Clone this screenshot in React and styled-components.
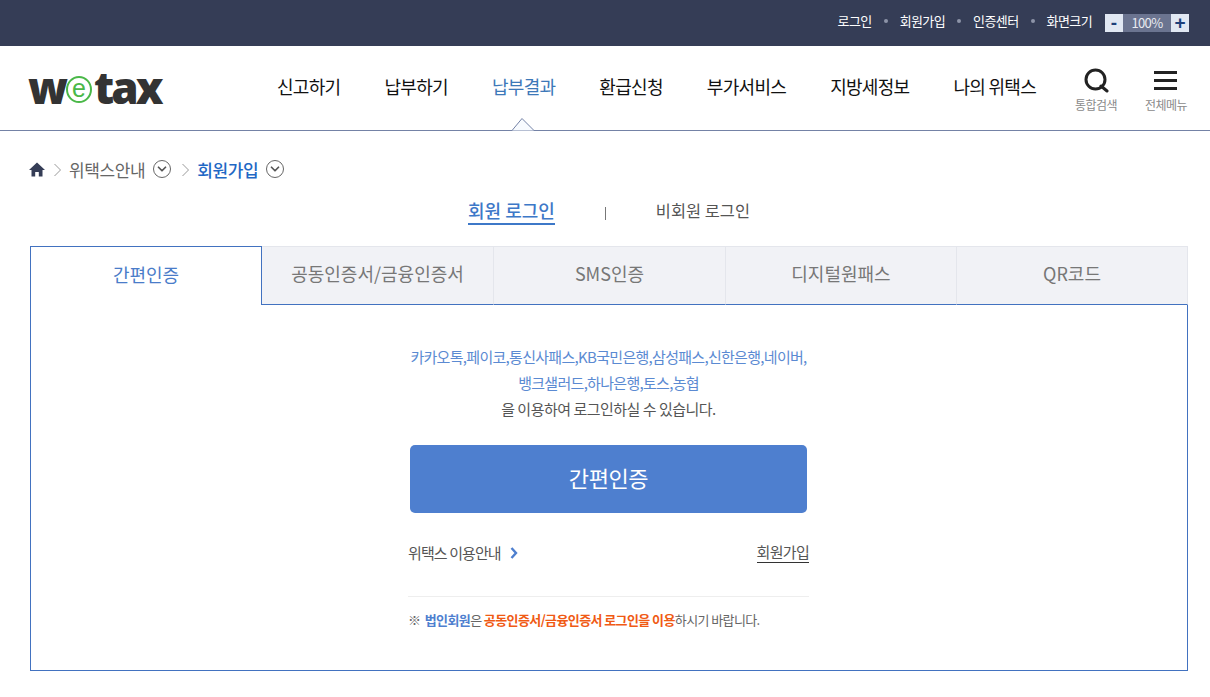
import React from "react";
import styled, { createGlobalStyle } from "styled-components";
import { FiChevronDown } from "react-icons/fi";

const GlobalStyle = createGlobalStyle`
  html, body {
    margin: 0;
    padding: 0;
    background: #fff;
    font-family: "Noto Sans CJK KR", "Noto Sans", sans-serif;
    color: #333;
    overflow: hidden;
  }
  * { box-sizing: border-box; }
`;

const TopBar = styled.div`
  height: 46px;
  background: #353d56;
  display: flex;
  align-items: center;
  justify-content: flex-end;
  padding: 0 21px 0 0;
`;
const TopLink = styled.a`
  color: #fff;
  font-size: 13px;
  letter-spacing: -0.6px;
  display: flex;
  align-items: center;
  margin-bottom: 5px;
  &:not(:last-of-type)::after {
    content: "";
    width: 4px;
    height: 4px;
    border-radius: 50%;
    background: #8d94a8;
    margin: 0 12px 0 12px;
  }
`;
const Zoomer = styled.div`
  display: flex;
  height: 18px;
  margin-left: 13px;
  align-items: stretch;
`;
const ZoomBtn = styled.span`
  width: 18px;
  background: #e1e8f3;
  color: #1d3f7a;
  font: 700 19px/17px "Liberation Sans", sans-serif;
  text-align: center;
`;
const ZoomValue = styled.span`
  width: 48px;
  background: #6b7490;
  color: #e9ebf0;
  font: 400 13px/17px "Noto Sans CJK KR", sans-serif;
  letter-spacing: -0.6px;
  text-align: center;
`;

const Header = styled.header`
  position: relative;
  height: 85px;
  border-bottom: 1px solid #7482a6;
  display: flex;
  align-items: flex-start;
  padding-left: 28px;
`;
const Logo = styled.div`
  width: 249px;
  height: 60px;
  display: flex;
  align-items: center;
  padding-top: 21px;
  font: 800 44px/60px "Open Sans", sans-serif;
  color: #333;
  letter-spacing: -3px;
`;
const LogoMark = styled.span`
  width: 26px;
  height: 27px;
  margin: 6px 2px 0 1px;
  border: 2px solid #4ab848;
  border-radius: 50%;
  color: #4ab848;
  font: 400 25px/20px "Liberation Sans", sans-serif;
  text-align: center;
  letter-spacing: 0;
`;
const Nav = styled.nav`
  display: flex;
  gap: 44px;
  padding-top: 27px;
`;
const NavItem = styled.a`
  color: ${(p) => (p.$active ? "#3d78b8" : "#111")};
  font-size: 18px;
  line-height: 27px;
  letter-spacing: -0.7px;
  white-space: nowrap;
`;
const HeaderTools = styled.div`
  display: flex;
  gap: 26px;
  margin-left: 38px;
  padding-top: 22px;
`;
const Tool = styled.div`
  width: 44px;
  display: flex;
  flex-direction: column;
  align-items: center;
  color: #8a8a8a;
  font-size: 12px;
  letter-spacing: -0.5px;
  line-height: 16px;
  white-space: nowrap;
  svg { margin-bottom: 3px; }
`;
const Notch = styled.svg`
  position: absolute;
  left: 509px;
  bottom: -1px;
  width: 26px;
  height: 14px;
`;

const Main = styled.main`
  padding: 0 22px 0 30px;
`;
const Crumbs = styled.div`
  height: 68px;
  padding-top: 26px;
  display: flex;
  align-items: flex-start;
  font-size: 17px;
  line-height: 25px;
  letter-spacing: -0.4px;
  color: #666;
`;
const HomeIcon = styled.svg`
  width: 16px;
  height: 16px;
  margin: 5px 0 0 -1px;
  fill: #353d56;
`;
const CrumbSep = styled.svg`
  width: 7px;
  height: 14px;
  margin: 6px 8px 0 ${(p) => p.$gap}px;
  fill: none;
  stroke: #999;
`;
const CrumbText = styled.span`
  color: ${(p) => (p.$current ? "#1f68c5" : "#666")};
  font-weight: ${(p) => (p.$current ? 500 : 400)};
`;
const CrumbToggle = styled.span`
  width: 18px;
  height: 18px;
  margin: 3px 0 0 8px;
  border: 1px solid #666;
  border-radius: 50%;
  display: flex;
  align-items: center;
  justify-content: center;
  color: #555;
`;

const SubTabs = styled.div`
  height: 47px;
  display: flex;
  justify-content: center;
  align-items: flex-start;
`;
const SubTab = styled.a`
  font-size: ${(p) => (p.$active ? "18px" : "16.4px")};
  line-height: 23px;
  padding-bottom: 1px;
  font-weight: ${(p) => (p.$active ? 500 : 400)};
  color: ${(p) => (p.$active ? "#3d78c8" : "#555")};
  border-bottom: ${(p) => (p.$active ? "2px solid #3d78c8" : "2px solid transparent")};
`;
const SubDivider = styled.span`
  width: 1px;
  height: 13px;
  margin: 8px 50px 0 50px;
  background: #777;
`;

const Tabs = styled.div`
  display: grid;
  grid-template-columns: 232px 232px 232px 231px 231px;
  height: 59px;
`;
const Tab = styled.div`
  display: flex;
  align-items: center;
  justify-content: center;
  padding-bottom: 5px;
  font-size: 18px;
  letter-spacing: 0;
  color: ${(p) => (p.$active ? "#4a7cc9" : "#777")};
  background: ${(p) => (p.$active ? "#fff" : "#f1f2f6")};
  border-style: solid;
  border-color: ${(p) => (p.$active ? "#4272c0" : "#e4e6ec")};
  border-width: ${(p) => (p.$active ? "1px 1px 0 1px" : "1px 1px 1px 0")};
  border-bottom-color: #4272c0;
`;
const Panel = styled.section`
  height: 366px;
  border: 1px solid #4272c0;
  border-top: 0;
  display: flex;
  flex-direction: column;
  align-items: center;
  padding: 39px 1px 0 0;
`;
const Intro = styled.p`
  margin: 0;
  font-size: 15px;
  line-height: 26px;
  letter-spacing: -0.7px;
  text-align: center;
  color: #555;
`;
const Providers = styled.span`
  color: #5b8ad2;
`;
const Usage = styled.span`
  letter-spacing: -0.5px;
`;
const LoginButton = styled.button`
  width: 397px;
  height: 68px;
  margin-top: 23px;
  padding: 0 0 4px;
  border: 0;
  border-radius: 5px;
  background: #4e7fcf;
  color: #fff;
  font: 400 22px "Noto Sans CJK KR", sans-serif;
  letter-spacing: -0.4px;
`;
const LinkRow = styled.div`
  width: 401px;
  height: 84px;
  padding-top: 28px;
  display: flex;
  justify-content: space-between;
  align-items: flex-start;
  border-bottom: 1px solid #eee;
  font-size: 15px;
  line-height: 24px;
  letter-spacing: -0.7px;
  color: #555;
`;
const GuideLink = styled.a`
  display: flex;
  align-items: center;
  letter-spacing: -0.9px;
`;
const GuideArrow = styled.svg`
  width: 8px;
  height: 12px;
  margin-left: 9px;
  fill: none;
  stroke: #4e7fcf;
  stroke-width: 2.4;
`;
const JoinLink = styled.a`
  border-bottom: 1px solid #333;
  height: 22px;
  line-height: 22px;
`;
const Notice = styled.p`
  width: 401px;
  margin: 11px 0 0;
  font-size: 13px;
  line-height: 24px;
  letter-spacing: -0.6px;
  color: #666;
  white-space: nowrap;
`;
const NoticeMark = styled.span`
  margin-right: 2px;
`;
const Strong = styled.b`
  font-weight: 700;
  color: ${(p) => p.$color};
`;

const navItems = ["신고하기", "납부하기", "납부결과", "환급신청", "부가서비스", "지방세정보", "나의 위택스"];
const topLinks = ["로그인", "회원가입", "인증센터", "화면크기"];
const tabItems = ["간편인증", "공동인증서/금융인증서", "SMS인증", "디지털원패스", "QR코드"];

const Sep = ({ gap }) => (
  <CrumbSep viewBox="0 0 7 14" $gap={gap}>
    <path d="M0.5 1l6 6-6 6" />
  </CrumbSep>
);

const App = () => {
  return (
    <>
      <GlobalStyle />
      <TopBar>
        {topLinks.map((t) => (
          <TopLink key={t}>{t}</TopLink>
        ))}
        <Zoomer>
          <ZoomBtn>-</ZoomBtn>
          <ZoomValue>100%</ZoomValue>
          <ZoomBtn>+</ZoomBtn>
        </Zoomer>
      </TopBar>

      <Header>
        <Logo>
          w<LogoMark>e</LogoMark>tax
        </Logo>
        <Nav>
          {navItems.map((t) => (
            <NavItem key={t} $active={t === "납부결과"}>
              {t}
            </NavItem>
          ))}
        </Nav>
        <HeaderTools>
          <Tool>
            <svg width="26" height="26" viewBox="0 0 26 26" fill="none" stroke="#222" strokeWidth="3">
              <circle cx="12.5" cy="11.5" r="9.5" />
              <path d="M18 18l6 5" strokeLinecap="round" />
            </svg>
            통합검색
          </Tool>
          <Tool>
            <svg width="26" height="26" viewBox="0 0 26 26" fill="#222">
              <rect x="1" y="3" width="23" height="3" />
              <rect x="1" y="11" width="23" height="3" />
              <rect x="1" y="19" width="23" height="3" />
            </svg>
            전체메뉴
          </Tool>
        </HeaderTools>
        <Notch viewBox="0 0 26 14">
          <path d="M0 13.5h3L13 1.5l12 12h1" fill="#f8fbff" stroke="#7482a6" />
        </Notch>
      </Header>

      <Main>
        <Crumbs>
          <HomeIcon viewBox="0 0 16 16">
            <path d="M8 .5L16 8h-2.5v6.5H9.8V10H6.2v4.5H2.5V8H0z" />
          </HomeIcon>
          <Sep gap={9} />
          <CrumbText>위택스안내</CrumbText>
          <CrumbToggle>
            <FiChevronDown size={14} strokeWidth={3} />
          </CrumbToggle>
          <Sep gap={11} />
          <CrumbText $current>회원가입</CrumbText>
          <CrumbToggle>
            <FiChevronDown size={14} strokeWidth={3} />
          </CrumbToggle>
        </Crumbs>

        <SubTabs>
          <SubTab $active>회원 로그인</SubTab>
          <SubDivider />
          <SubTab>비회원 로그인</SubTab>
        </SubTabs>

        <Tabs>
          {tabItems.map((t, i) => (
            <Tab key={t} $active={i === 0}>
              {t}
            </Tab>
          ))}
        </Tabs>
        <Panel>
          <Intro>
            <Providers>
              카카오톡,페이코,통신사패스,KB국민은행,삼성패스,신한은행,네이버,
              <br />
              뱅크샐러드,하나은행,토스,농협
            </Providers>
            <br />
            <Usage>을 이용하여 로그인하실 수 있습니다.</Usage>
          </Intro>
          <LoginButton>간편인증</LoginButton>
          <LinkRow>
            <GuideLink>
              위택스 이용안내
              <GuideArrow viewBox="0 0 8 12">
                <path d="M1.5 1l4.5 5-4.5 5" />
              </GuideArrow>
            </GuideLink>
            <JoinLink>회원가입</JoinLink>
          </LinkRow>
          <Notice>
            <NoticeMark>※</NoticeMark> <Strong $color="#4e7fcf">법인회원</Strong>은{" "}
            <Strong $color="#f05a14">공동인증서/금융인증서 로그인을 이용</Strong>하시기 바랍니다.
          </Notice>
        </Panel>
      </Main>
    </>
  );
};

export default App;
